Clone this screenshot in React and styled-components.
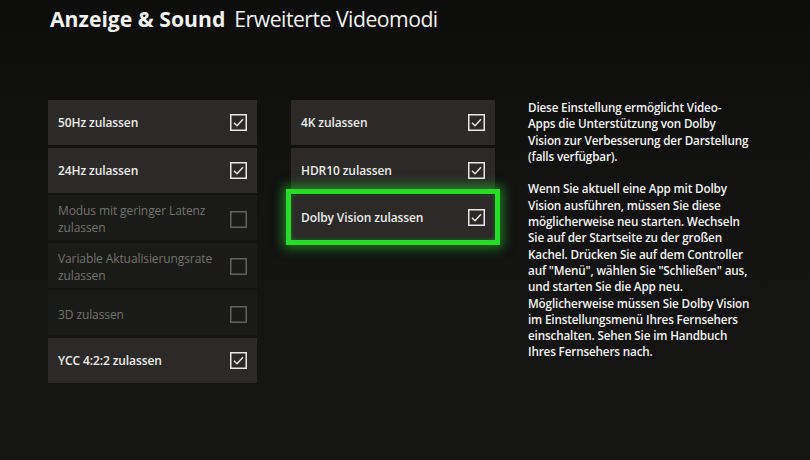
import React from "react";
import styled, { createGlobalStyle } from "styled-components";

const Global = createGlobalStyle`
  html, body { margin: 0; padding: 0; background: #121211; }
  body { width: 810px; height: 460px; overflow: hidden; font-family: "Open Sans", "Noto Sans", sans-serif; }
  #root { width: 810px; height: 460px; }
`;

const Screen = styled.div`
  width: 810px;
  height: 460px;
  box-sizing: border-box;
  padding: 4px 0 0 50px;
  background: linear-gradient(180deg, #0d0d0c 0%, #121211 40%, #151513 100%);
  color: #fff;
`;

const Header = styled.h1`
  margin: 0;
  font-size: 21.2px;
  line-height: 30px;
  font-weight: 400;
  color: #f2f2f2;
`;

const Strong = styled.span`
  font-weight: 700;
  margin-right: 9px;
`;

const Sub = styled.span`
  letter-spacing: -0.5px;
`;

const Body = styled.div`
  display: flex;
  align-items: flex-start;
  margin-top: 66px;
  margin-left: -2px;
`;

const Column = styled.div`
  display: flex;
  flex-direction: column;
  gap: 2.6px;
  width: ${(p) => p.$w}px;
  margin-right: ${(p) => p.$mr}px;
`;

const Row = styled.div`
  position: relative;
  height: 45px;
  box-sizing: border-box;
  display: flex;
  align-items: center;
  justify-content: space-between;
  padding: ${(p) => (p.$disabled ? "3px" : "0")} 10px 0 10px;
  background: ${(p) => (p.$disabled ? "#1a1a18" : "#2b2a28")};
  color: ${(p) => (p.$disabled ? "#74736f" : "#ececea")};
  font-size: 12px;
  line-height: 17px;
  font-weight: ${(p) => (p.$disabled ? 400 : 600)};
  letter-spacing: -0.1px;
`;

const Focus = styled.div`
  position: absolute;
  inset: -6px -5px -5px -5px;
  border: 5px solid #29dc29;
  box-shadow: 0 0 10px 3px rgba(40, 210, 40, 0.55), inset 0 0 4px rgba(40, 210, 40, 0.4);
  pointer-events: none;
`;

const Label = styled.span`
  max-width: 160px;
`;

const Box = styled.svg`
  flex: none;
  width: 17px;
  height: 17px;
`;

const Check = ({ checked, disabled }) => (
  <Box viewBox="0 0 17 17">
    <rect
      x="0.75"
      y="0.75"
      width="15.5"
      height="15.5"
      fill="none"
      stroke={disabled ? "#62625f" : "#e8e8e6"}
      strokeWidth="1.5"
    />
    {checked && (
      <polyline
        points="4,8.8 7,11.8 13,5.2"
        fill="none"
        stroke="#e8e8e6"
        strokeWidth="1.4"
      />
    )}
  </Box>
);

const Info = styled.div`
  margin-left: 33px;
  margin-top: -1px;
  font-size: 11.7px;
  line-height: 16.3px;
  font-weight: 600;
  color: #f4f4f2;
  letter-spacing: -0.15px;
  white-space: nowrap;
`;

const Para = styled.p`
  margin: 0 0 16.3px 0;
`;

const Line = styled.span`
  display: block;
`;

const para1 = [
  "Diese Einstellung ermöglicht Video-",
  "Apps die Unterstützung von Dolby",
  "Vision zur Verbesserung der Darstellung",
  "(falls verfügbar).",
];

const para2 = [
  "Wenn Sie aktuell eine App mit Dolby",
  "Vision ausführen, müssen Sie diese",
  "möglicherweise neu starten. Wechseln",
  "Sie auf der Startseite zu der großen",
  "Kachel. Drücken Sie auf dem Controller",
  'auf "Menü", wählen Sie "Schließen" aus,',
  "und starten Sie die App neu.",
  "Möglicherweise müssen Sie Dolby Vision",
  "im Einstellungsmenü Ihres Fernsehers",
  "einschalten. Sehen Sie im Handbuch",
  "Ihres Fernsehers nach.",
];

const left = [
  { t: "50Hz zulassen", c: true },
  { t: "24Hz zulassen", c: true },
  { t: "Modus mit geringer Latenz zulassen", d: true },
  { t: "Variable Aktualisierungsrate zulassen", d: true },
  { t: "3D zulassen", d: true },
  { t: "YCC 4:2:2 zulassen", c: true },
];

const mid = [
  { t: "4K zulassen", c: true },
  { t: "HDR10 zulassen", c: true },
  { t: "Dolby Vision zulassen", c: true, f: true },
];

const Item = ({ t, c, d, f }) => (
  <Row $disabled={d}>
    <Label>{t}</Label>
    <Check checked={c} disabled={d} />
    {f && <Focus />}
  </Row>
);

export default function App() {
  return (
    <>
      <Global />
      <Screen>
        <Header>
          <Strong>Anzeige &amp; Sound</Strong>
          <Sub>Erweiterte Videomodi</Sub>
        </Header>
        <Body>
          <Column $w={209} $mr={34}>
            {left.map((r) => (
              <Item key={r.t} {...r} />
            ))}
          </Column>
          <Column $w={204} $mr={0}>
            {mid.map((r) => (
              <Item key={r.t} {...r} />
            ))}
          </Column>
          <Info>
            <Para>
              {para1.map((l) => (
                <Line key={l}>{l}</Line>
              ))}
            </Para>
            <Para>
              {para2.map((l) => (
                <Line key={l}>{l}</Line>
              ))}
            </Para>
          </Info>
        </Body>
      </Screen>
    </>
  );
}
